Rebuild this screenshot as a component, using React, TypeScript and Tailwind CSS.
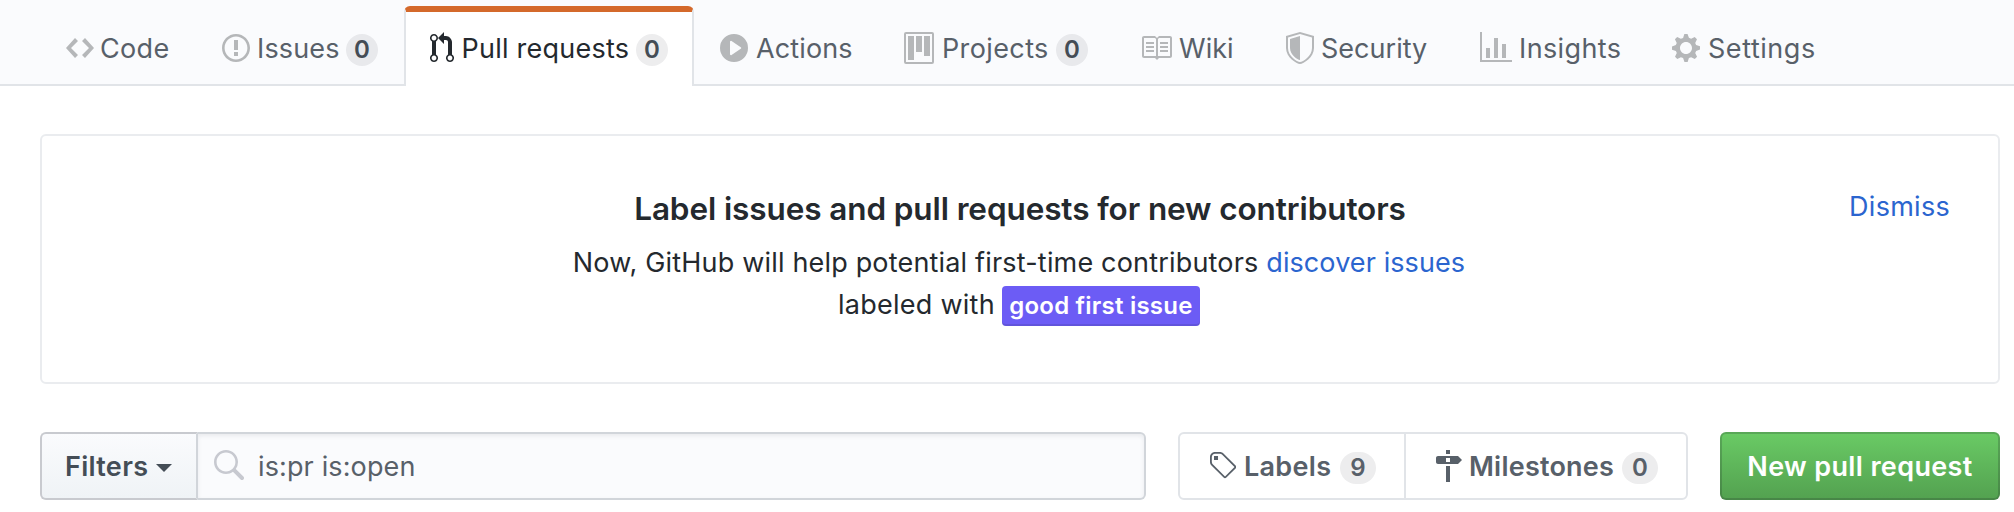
import type { ReactNode } from "react";

const paths = {
  code: "M9.5 3L8 4.5 11.5 8 8 11.5 9.5 13 14 8 9.5 3zm-5 0L0 8l4.5 5L6 11.5 2.5 8 6 4.5 4.5 3z",
  issue:
    "M7 2.3c3.14 0 5.7 2.56 5.7 5.7s-2.56 5.7-5.7 5.7A5.71 5.71 0 0 1 1.3 8c0-3.14 2.56-5.7 5.7-5.7zM7 1C3.14 1 0 4.14 0 8s3.14 7 7 7 7-3.14 7-7-3.14-7-7-7zm1 3H6v5h2V4zm0 6H6v2h2v-2z",
  pull: "M11 11.28V5c-.03-.78-.34-1.47-.94-2.06C9.46 2.35 8.78 2.03 8 2H7V0L4 3l3 3V4h1c.27.02.48.11.69.31.21.2.3.42.31.69v6.28A1.993 1.993 0 0 0 10 15a1.993 1.993 0 0 0 1-3.72zm-1 2.92c-.66 0-1.2-.55-1.2-1.2 0-.65.55-1.2 1.2-1.2.65 0 1.2.55 1.2 1.2 0 .65-.55 1.2-1.2 1.2zM4 3c0-1.11-.89-2-2-2a1.993 1.993 0 0 0-1 3.72v6.56A1.993 1.993 0 0 0 2 15a1.993 1.993 0 0 0 1-3.72V4.72c.59-.34 1-.98 1-1.72zm-.8 10c0 .66-.55 1.2-1.2 1.2-.65 0-1.2-.55-1.2-1.2 0-.65.55-1.2 1.2-1.2.65 0 1.2.55 1.2 1.2zM2 4.2C1.34 4.2.8 3.65.8 3c0-.65.55-1.2 1.2-1.2.65 0 1.2.55 1.2 1.2 0 .65-.55 1.2-1.2 1.2z",
  play: "M14 8A7 7 0 1 1 0 8a7 7 0 0 1 14 0zm-8.223 3.482l4.599-3.066a.5.5 0 0 0 0-.832L5.777 4.518A.5.5 0 0 0 5 4.934v6.132a.5.5 0 0 0 .777.416z",
  project:
    "M10 12h3V2h-3v10zm-4-2h3V2H6v8zm-4 4h3V2H2v12zm-1 1h13V1H1v14zM14 0H1a1 1 0 0 0-1 1v14a1 1 0 0 0 1 1h13a1 1 0 0 0 1-1V1a1 1 0 0 0-1-1z",
  book: "M3 5h4v1H3V5zm0 3h4V7H3v1zm0 2h4V9H3v1zm11-5h-4v1h4V5zm0 2h-4v1h4V7zm0 2h-4v1h4V9zm2-6v9c0 .55-.45 1-1 1H9.5l-1 1-1-1H2c-.55 0-1-.45-1-1V3c0-.55.45-1 1-1h5.5l1 1 1-1H15c.55 0 1 .45 1 1zm-8 .5L7.5 3H2v9h6V3.5zm7-.5H9.5l-.5.5V12h6V3z",
  shield:
    "M0 2l7-2 7 2v6.02C14 12.69 8.69 16 7 16c-1.69 0-7-3.31-7-7.98V2zm1 .75L7 1l6 1.75v5.268C13 12.104 8.449 15 7 15c-1.449 0-6-2.896-6-6.982V2.75zm1 .75L7 2v12c-1.207 0-5-2.482-5-5.985V3.5z",
  graph: "M16 14v1H0V0h1v14h15zM5 13H3V8h2v5zm4 0H7V3h2v10zm4 0h-2V6h2v7z",
  gear: "M14 8.77v-1.6l-1.94-.64-.45-1.09.88-1.84-1.13-1.13-1.81.91-1.09-.45-.69-1.92h-1.6l-.63 1.94-1.11.45-1.84-.88-1.13 1.13.91 1.81-.45 1.09L0 7.23v1.59l1.94.64.45 1.09-.88 1.84 1.13 1.13 1.81-.91 1.09.45.69 1.92h1.59l.63-1.94 1.11-.45 1.84.88 1.13-1.13-.92-1.81.47-1.09L14 8.75v.02zM7 11c-1.66 0-3-1.34-3-3s1.34-3 3-3 3 1.34 3 3-1.34 3-3 3z",
  search:
    "M15.7 13.3l-3.81-3.83A5.93 5.93 0 0 0 13 6c0-3.31-2.69-6-6-6S1 2.69 1 6s2.69 6 6 6c1.3 0 2.48-.41 3.47-1.11l3.83 3.81c.19.2.45.3.7.3.25 0 .52-.09.7-.3a.996.996 0 0 0 0-1.41v.01zM7 10.7c-2.59 0-4.7-2.11-4.7-4.7 0-2.59 2.11-4.7 4.7-4.7 2.59 0 4.7 2.11 4.7 4.7 0 2.59-2.11 4.7-4.7 4.7z",
  tag: "M7.73 1.73C7.26 1.26 6.62 1 5.96 1H3.5C2.13 1 1 2.13 1 3.5v2.47c0 .66.27 1.3.73 1.77l6.06 6.06c.39.39 1.02.39 1.41 0l4.59-4.59a.996.996 0 0 0 0-1.41L7.73 1.73zM2.38 7.09c-.31-.3-.47-.7-.47-1.13V3.5c0-.88.72-1.59 1.59-1.59h2.47c.42 0 .83.16 1.13.47l6.14 6.13-4.73 4.73-6.13-6.15zM3.01 3h2v2H3V3h.01z",
  milestone:
    "M8 2H6V0h2v2zm4 5H2c-.55 0-1-.45-1-1V4c0-.55.45-1 1-1h10l2 2-2 2zM8 4H6v2h2V4zM6 16h2V8H6v8z",
};

function Icon({ name, w, className }: { name: keyof typeof paths; w: number; className: string }) {
  return (
    <svg
      viewBox={`0 0 ${w} 16`}
      width={w * 2}
      height={32}
      fill="currentColor"
      fillRule="evenodd"
      aria-hidden="true"
      className={`shrink-0 ${className}`}
    >
      <path d={paths[name]} />
    </svg>
  );
}

function Counter({ children, className }: { children: ReactNode; className: string }) {
  return (
    <span
      className={`flex h-8 shrink-0 items-center justify-center rounded-[40px] bg-[#1b1f23]/8 text-[24px] leading-8 font-semibold ${className}`}
    >
      {children}
    </span>
  );
}

const tabs: {
  label: string;
  icon: keyof typeof paths;
  w: number;
  tab: string;
  text: string;
  count?: number;
  active?: boolean;
}[] = [
  { label: "Code", icon: "code", w: 14, tab: "w-[156px] pl-[26px]", text: "ml-[6px] tracking-[0.35px]" },
  { label: "Issues", icon: "issue", w: 14, tab: "w-[208px] pl-[26px]", text: "ml-[7px] w-[89px] tracking-[0.15px]", count: 0 },
  { label: "Pull requests", icon: "pull", w: 12, tab: "w-[290px] pl-[24px]", text: "ml-[7.5px] w-[174.5px] tracking-[0.24px]", count: 0, active: true },
  { label: "Actions", icon: "play", w: 14, tab: "w-[184px] pl-[26px]", text: "ml-[8px] tracking-[0.12px]" },
  { label: "Projects", icon: "project", w: 15, tab: "w-[236px] pl-[26px]", text: "ml-[8px] w-[114px] tracking-[0.38px]", count: 0 },
  { label: "Wiki", icon: "book", w: 16, tab: "w-[146px] pl-[26px]", text: "ml-[7px] tracking-[0.05px]" },
  { label: "Security", icon: "shield", w: 14, tab: "w-[194px] pl-[26px]", text: "ml-[7px] tracking-[0.02px]" },
  { label: "Insights", icon: "graph", w: 16, tab: "w-[192px] pl-[26px]", text: "ml-[7px] tracking-[0.38px]" },
  { label: "Settings", icon: "gear", w: 14, tab: "w-[180px] pl-[26px]", text: "ml-[8px] tracking-[0.55px]" },
];

export default function App() {
  return (
    <div className="h-[512px] w-[2014px] overflow-hidden bg-white font-['Inter',sans-serif] text-[27px] leading-[42px] text-[#24292e]">
      <nav className="flex h-[86px] bg-[#fafbfd] pt-[6px] pl-[40px] shadow-[inset_0_-2px_0_#e1e4e8]">
        {tabs.map((t) => (
          <a
            key={t.label}
            className={`flex h-[80px] shrink-0 items-center whitespace-nowrap ${t.tab} ${
              t.active
                ? "rounded-t-[6px] border-x-2 border-t-[6px] border-x-[#e1e4e8] border-t-[#d4692b] bg-white pb-[2px] text-[#24292e]"
                : "pt-[6px] pb-[2px] text-[#586069]"
            }`}
          >
            <Icon name={t.icon} w={t.w} className={t.active ? "text-[#24292e]" : "text-[#b5b7b9]"} />
            <span className={`shrink-0 pt-[2px] ${t.text}`}>{t.label}</span>
            {t.count !== undefined && <Counter className="mt-1 w-8 text-[#444d56]">{t.count}</Counter>}
          </a>
        ))}
      </nav>

      <main className="pt-[48px] pl-[40px]">
        <section className="grid h-[250px] w-[1960px] grid-cols-[1fr_auto_1fr] rounded-[6px] border-2 border-[#eaecef] px-[48px] pt-[48px]">
          <div />
          <div className="text-center">
            <h2 className="text-[31.5px] leading-[49px] font-semibold tracking-[-0.1px]">
              Label issues and pull requests for new contributors
            </h2>
            <p className="mt-[9px] pr-[2px] tracking-[0.18px]">
              Now, GitHub will help potential first-time contributors{" "}
              <a className="tracking-[0.09px] text-[#2b65cf]">discover issues</a>
            </p>
            <p className="flex h-[42px] items-center justify-center gap-[7px] pr-[2px] tracking-[0.25px]">
              labeled with
              <span className="mt-[2px] flex h-[40px] w-[198px] items-center justify-center rounded-[4px] bg-[#6c5cf5] text-[24px] leading-[40px] font-semibold tracking-[0.22px] text-white shadow-[inset_0_-2px_0_rgba(27,31,35,0.12)]">
                good first issue
              </span>
            </p>
          </div>
          <a className="mt-[2px] h-[42px] text-right tracking-[0.28px] text-[#2b65cf]">Dismiss</a>
        </section>

        <div className="mt-[48px] flex h-[68px]">
          <button className="flex w-[158px] items-center rounded-l-[6px] border-2 border-[#c8cacf] border-r-[#d1d5da] bg-linear-to-b from-[#fafbfd] to-[#eff3f6] pl-[23px] font-semibold tracking-[0.3px] text-[#444d56]">
            <span className="w-[84px] pt-[2px] text-left">Filters</span>
            <span className="mt-[4px] ml-[7px] border-x-8 border-t-8 border-x-transparent border-t-[#444d56]" />
          </button>
          <div className="flex w-[948px] items-center rounded-r-[6px] border-2 border-l-0 border-[#d1d5da] bg-[#fafbfd] pl-[14px] tracking-[0.13px] text-[#586069] shadow-[inset_0_2px_4px_rgba(27,31,35,0.075)]">
            <Icon name="search" w={16} className="text-[#c7c9d0]" />
            <span className="ml-[14px] pt-[2px]">is:pr is:open</span>
          </div>

          <div className="ml-[32px] flex w-[510px] rounded-[6px] border-2 border-[#e1e4e8] font-semibold text-[#586069]">
            <a className="flex w-[226px] items-center border-r-2 border-[#e1e4e8] pl-[28px]">
              <Icon name="tag" w={14} className="" />
              <span className="ml-[8px] w-[96px] pt-[2px] tracking-[0.3px]">Labels</span>
              <Counter className="mt-1 w-9">9</Counter>
            </a>
            <a className="flex items-center pl-[28px]">
              <Icon name="milestone" w={14} className="" />
              <span className="ml-[7px] w-[153px] pt-[2px] tracking-[0.22px]">Milestones</span>
              <Counter className="mt-1 w-9">0</Counter>
            </a>
          </div>

          <button className="ml-[32px] flex w-[280px] items-center justify-center rounded-[6px] border-2 border-[#1b1f23]/20 bg-linear-to-b from-[#6acb65] to-[#53a150] bg-origin-border pt-[2px] font-semibold tracking-[0.36px] text-white">
            New pull request
          </button>
        </div>
      </main>
    </div>
  );
}
